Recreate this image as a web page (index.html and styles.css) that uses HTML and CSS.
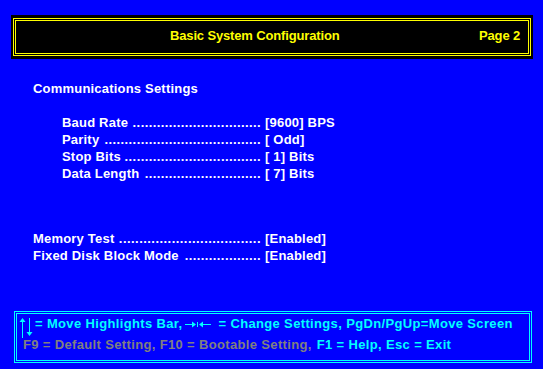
FILE: index.html
```html
<!DOCTYPE html>
<html>
<head>
<meta charset="utf-8">
<link rel="stylesheet" href="styles.css">
</head>
<body>
<div class="screen">
  <header class="hdr">
    <div class="hdr-frame">
      <span class="title">Basic System Configuration</span>
      <span class="page">Page 2</span>
    </div>
  </header>

  <section class="comms">
    <h2 class="sect">Communications Settings</h2>
    <div class="group">
      <div class="row"><span class="lead"><span class="lbl">Baud Rate</span><span class="dots">................................</span></span><span class="val">[9600] BPS</span></div>
      <div class="row"><span class="lead"><span class="lbl">Parity</span><span class="dots">.......................................</span></span><span class="val">[ Odd]</span></div>
      <div class="row"><span class="lead"><span class="lbl">Stop Bits</span><span class="dots">..................................</span></span><span class="val">[ 1] Bits</span></div>
      <div class="row"><span class="lead"><span class="lbl">Data Length</span><span class="dots">.............................</span></span><span class="val">[ 7] Bits</span></div>
    </div>
  </section>

  <section class="misc">
    <div class="row"><span class="lead"><span class="lbl">Memory Test</span><span class="dots wide">...................................</span></span><span class="val">[Enabled]</span></div>
    <div class="row"><span class="lead"><span class="lbl">Fixed Disk Block Mode</span><span class="dots">...................</span></span><span class="val">[Enabled]</span></div>
  </section>

  <footer class="help">
    <div class="help-line">
      <svg class="ico-ud" width="17" height="23" viewBox="0 0 17 23">
        <polygon points="5.5,3 2.5,7 8.5,7" fill="#00ffff"/>
        <rect x="5" y="6" width="1" height="17" fill="#00ffff"/>
        <rect x="12" y="3" width="1" height="15" fill="#00ffff"/>
        <polygon points="9.5,17 15.5,17 12.5,21" fill="#00ffff"/>
      </svg>
      <span class="txt">= Move Highlights Bar,</span>
      <svg class="ico-lr" width="26" height="17" viewBox="0 0 26 17">
        <rect x="0" y="9" width="8" height="1" fill="#00ffff"/>
        <polygon points="7,6.5 11,9.5 7,12.5" fill="#00ffff"/>
        <rect x="12" y="7" width="1" height="5" fill="#00ffff"/>
        <polygon points="18,6.5 14,9.5 18,12.5" fill="#00ffff"/>
        <rect x="17" y="9" width="9" height="1" fill="#00ffff"/>
      </svg>
      <span class="txt">= Change Settings, PgDn/PgUp=Move Screen</span>
    </div>
    <div class="help-line second">
      <span class="dim">F9 = Default Setting, F10 = Bootable Setting,</span>&nbsp;<span class="txt">F1 = Help, Esc = Exit</span>
    </div>
  </footer>
</div>
</body>
</html>
```

FILE: styles.css
```css
html, body {
  margin: 0;
  padding: 0;
}

body {
  background: #0000ff;
  color: #ffffff;
  font-family: "Liberation Sans", Arial, sans-serif;
  font-weight: bold;
  font-size: 13px;
  line-height: 17px;
}

.screen {
  width: 543px;
  height: 369px;
  overflow: hidden;
}

.hdr {
  margin: 15px 10px 0 11px;
  background: #000000;
  padding: 3px 2px;
}

.hdr-frame {
  border: 3px double #ffff00;
  display: flex;
  justify-content: space-between;
  padding: 6px 8px 9px 154px;
  color: #ffff00;
  letter-spacing: -0.15px;
}

.comms {
  margin-top: 21px;
}

.sect {
  margin: 0;
  padding-left: 33px;
  font-size: 13px;
  line-height: 17px;
  font-weight: bold;
  letter-spacing: 0.2px;
}

.group {
  margin-top: 17px;
}

.row {
  display: grid;
  grid-template-columns: 265px auto;
  height: 17px;
  letter-spacing: 0.2px;
}

.lead {
  display: flex;
  justify-content: space-between;
  padding-left: 62px;
  padding-right: 4px;
  white-space: nowrap;
}

.misc {
  margin-top: 48px;
}

.misc .lead {
  padding-left: 33px;
}

.lbl {
  white-space: nowrap;
}

.dots {
  white-space: nowrap;
  letter-spacing: 0.4px;
}

.dots.wide {
  letter-spacing: 0.45px;
}

.val {
  white-space: nowrap;
}

.help {
  margin: 47px 0 0 14px;
  width: 518px;
  height: 52px;
  box-sizing: border-box;
  border: 3px double #00ffff;
  padding-top: 1px;
  color: #00ffff;
  letter-spacing: 0.35px;
}

.help-line {
  display: flex;
  align-items: flex-start;
  height: 17px;
  white-space: nowrap;
}

.ico-ud {
  display: block;
  flex: none;
  margin-bottom: -6px;
}

.help-line .txt {
  margin-left: 1px;
}

.ico-lr {
  display: block;
  flex: none;
  margin: 0 6px 0 3px;
}

.second {
  margin-top: 4px;
  padding-left: 6px;
}

.dim {
  color: #808080;
}
```
